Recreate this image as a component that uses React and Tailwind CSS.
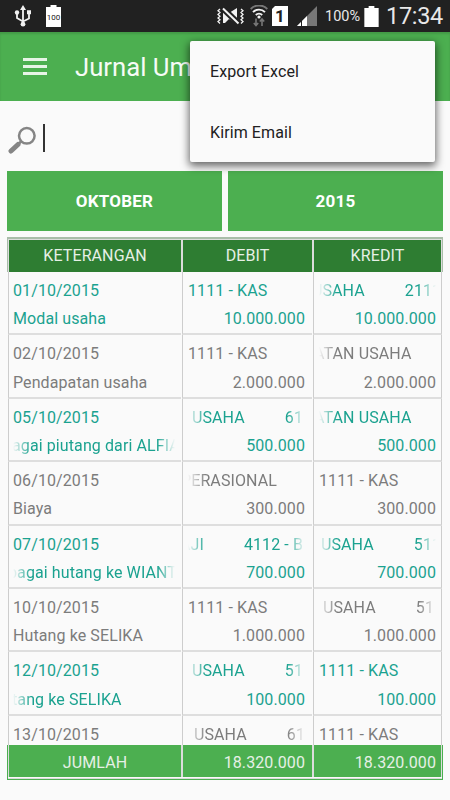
import React from 'react';

const entries = [
  {
    date: '01/10/2015',
    note: 'Modal usaha',
    debit: { parts: ['1111 - KAS'], shift: 0 },
    credit: { parts: ['USAHA', '2111'], shift: -7 },
    amount: '10.000.000',
  },
  {
    date: '02/10/2015',
    note: 'Pendapatan usaha',
    debit: { parts: ['1111 - KAS'], shift: 0 },
    credit: { parts: ['ATAN USAHA'], shift: -5 },
    amount: '2.000.000',
  },
  {
    date: '05/10/2015',
    note: 'agai piutang dari ALFIA',
    noteShift: -1,
    debit: { parts: ['USAHA', '61'], shift: 4 },
    credit: { parts: ['ATAN USAHA'], shift: -5 },
    amount: '500.000',
  },
  {
    date: '06/10/2015',
    note: 'Biaya',
    debit: { parts: ['PERASIONAL'], shift: -7 },
    credit: { parts: ['1111 - KAS'], shift: 0 },
    amount: '300.000',
  },
  {
    date: '07/10/2015',
    note: 'bagai hutang ke WIANT',
    noteShift: -5,
    debit: { parts: ['AJI', '4112 - B'], shift: -8 },
    credit: { parts: ['USAHA', '511'], shift: 2 },
    amount: '700.000',
  },
  {
    date: '10/10/2015',
    note: 'Hutang ke SELIKA',
    debit: { parts: ['1111 - KAS'], shift: 0 },
    credit: { parts: ['USAHA', '51'], shift: 4 },
    amount: '1.000.000',
  },
  {
    date: '12/10/2015',
    note: 'tang ke SELIKA',
    noteShift: -1,
    debit: { parts: ['USAHA', '51'], shift: 4 },
    credit: { parts: ['1111 - KAS'], shift: 0 },
    amount: '100.000',
  },
  {
    date: '13/10/2015',
    note: '',
    debit: { parts: ['USAHA', '61'], shift: 6 },
    credit: { parts: ['1111 - KAS'], shift: 0 },
    amount: '',
  },
];

const COLUMNS = 'grid grid-cols-[174px_131px_129px]';

const UsbIcon = () => (
  <svg className="h-[22px] w-[18px]" viewBox="0 0 18 22" fill="none" stroke="#f2f2f2" strokeWidth="1.8">
    <path d="M9 3v16M9 16.5 3 13V8.5M9 16.5l6-3V9" />
    <path d="M6 5 9 0l3 5zM13 5.2h4v4h-4z" fill="#f2f2f2" stroke="none" />
    <circle cx="3" cy="7.5" r="2.2" fill="#f2f2f2" stroke="none" />
    <circle cx="9" cy="19.2" r="2.4" fill="#f2f2f2" stroke="none" />
  </svg>
);

const MuteVibrateIcon = () => (
  <svg className="mr-[6px] h-[18px] w-[27px]" viewBox="0 0 27 18" fill="none" stroke="#f2f2f2" strokeWidth="1.3">
    <path d="M3 2 1 3.8l2 1.8-2 1.8 2 1.8-2 1.8 2 1.8-2 1.8 2 1.800M24 2l2 1.800-2 1.800 2 1.800-2 1.800 2 1.800-2 1.800 2 1.800-2 1.800" />
    <path d="M6 2v14h2l4-4 8 4.500V1L12 6z" fill="#f2f2f2" stroke="none" />
    <path d="M5.500 1 21.500 16.500" stroke="#212121" strokeWidth="6" />
    <path d="M6 1.500 21.500 16.500" strokeWidth="2" />
  </svg>
);

const WifiIcon = () => (
  <svg className="h-[22px] w-[18px]" viewBox="0 0 18 22" fill="none" strokeWidth="1.9">
    <path d="M.7 4a11.5 11.5 0 0 1 16.6 0" stroke="#777" />
    <path d="M3 7.2a8.2 8.2 0 0 1 12 0M5.8 10a4.6 4.6 0 0 1 6.4 0" stroke="#f2f2f2" />
    <circle cx="9" cy="12" r="1.6" fill="#f2f2f2" />
    <path d="M6 13.5v7M3.8 18 6 20.5 8.2 18M12 21v-7M9.8 16.5 12 14l2.2 2.5" stroke="#777" strokeWidth="1.6" />
  </svg>
);

const BatteryIcon = ({ className, label }) => (
  <svg className={className} viewBox="0 0 15 22">
    <path d="M4.5 0h6v2H15v20H0V2h4.5z" fill="#fff" />
    {label && (
      <text x="7.5" y="14.5" textAnchor="middle" fontSize="8" fontFamily="Roboto, sans-serif" fill="#212121">
        {label}
      </text>
    )}
  </svg>
);

const StatusBar = () => (
  <div className="flex h-8 items-center bg-[#212121] pl-[14px] text-[#e8e8e8]">
    <UsbIcon />
    <BatteryIcon className="ml-[14px] h-[22px] w-[15px]" label="100" />
    <div className="flex-1" />
    <MuteVibrateIcon />
    <WifiIcon />
    <div className="flex w-[182px] items-center pl-[4px]">
      <svg className="h-5 w-4 shrink-0" viewBox="0 0 16 20">
        <path d="M3 0h13v20H0V3z" fill="#fff" />
        <text x="8" y="16" textAnchor="middle" fontSize="17" fontWeight="700" fontFamily="Roboto, sans-serif" fill="#212121">1</text>
      </svg>
      <svg className="ml-[9px] h-5 w-5 shrink-0" viewBox="0 0 20 20">
        <path d="M0 20 20 0v20z" fill="#777" />
        <path d="M0 20 10 10v10z" fill="#fff" />
        <path d="M4.5 14v6" stroke="#212121" />
      </svg>
      <span className="ml-[8px] w-[36px] shrink-0 whitespace-nowrap pt-[2px] text-[14.5px] leading-[30px]">100%</span>
      <BatteryIcon className="ml-[3px] h-[21px] w-[15px] shrink-0" />
      <span className="ml-[7px] shrink-0 whitespace-nowrap text-[23.5px] leading-[30px] tracking-[-0.3px]">17:34</span>
    </div>
  </div>
);

const Menu = () => (
  <div className="absolute left-[190px] top-[41px] z-10 flex h-[121px] w-[245px] flex-col rounded-[2px] bg-[#fafafa] pl-5 text-[16px] tracking-[0.1px] text-[#212121] shadow-[0_3px_8px_1px_rgba(0,0,0,0.6)]">
    <div className="flex h-[62px] items-center">Export Excel</div>
    <div className="flex h-[59px] items-center">Kirim Email</div>
  </div>
);

const fade = (left, right) => {
  if (left && right) return '[mask-image:linear-gradient(to_right,transparent,#000_18px,#000_calc(100%-18px),transparent)]';
  if (left) return '[mask-image:linear-gradient(to_right,transparent,#000_18px)]';
  return '';
};

const Marquee = ({ parts, shift = 0 }) => (
  <div className={`flex w-full gap-[40px] overflow-hidden whitespace-nowrap ${fade(shift !== 0, parts.length > 1 || parts[0].length > 16)}`}>
    {parts.map((part, index) => (
      <span key={part} style={index === 0 ? { marginLeft: shift } : undefined}>{part}</span>
    ))}
  </div>
);

const CELL = 'overflow-hidden border-b-2 border-l border-b-[#dedede] border-l-[#cdcdcd] pt-[5px]';

const AccountCell = ({ account, amount, className }) => (
  <div className={`${CELL} pl-[5px] ${className}`}>
    <Marquee {...account} />
    <div className="text-right">{amount}</div>
  </div>
);

const EntryRow = ({ entry, odd }) => (
  <div className={`${COLUMNS} h-[63.4px] shrink-0 grid-rows-[63.4px] leading-[28.2px] ${odd ? 'text-[#1ba290]' : 'text-[#7c7c7c]'}`}>
    <div className={`${CELL} mr-px pl-[4px] pr-[6px]`}>
      <div>{entry.date}</div>
      <Marquee parts={[entry.note]} shift={entry.noteShift} />
    </div>
    <AccountCell account={entry.debit} amount={entry.amount} className="mr-px pr-[7px]" />
    <AccountCell account={entry.credit} amount={entry.amount} className="border-r border-r-[#cdcdcd] pr-[5px]" />
  </div>
);

export default function App() {
  return (
    <div className="relative flex h-[800px] w-[450px] flex-col overflow-hidden bg-[#fafafa] font-[Roboto,sans-serif]">
      <StatusBar />

      {/* Toolbar */}
      <div className="flex h-[69px] items-center bg-[#4caf50] pl-[23px] shadow-[inset_0_2px_2px_rgba(0,0,0,0.12)]">
        <div className="flex w-6 flex-col gap-[4px]">
          <div className="h-[3px] bg-[#e6f4e6]" />
          <div className="h-[3px] bg-[#e6f4e6]" />
          <div className="h-[3px] bg-[#e6f4e6]" />
        </div>
        <h1 className="ml-[28px] mt-[2px] whitespace-nowrap text-[25.7px] text-[#f6fbf6]">Jurnal Um</h1>
      </div>
      <Menu />

      {/* Search */}
      <div className="flex h-[70px] items-start pl-[8px] pt-[23px]">
        <svg className="mt-[2px] h-[29px] w-[29px]" viewBox="0 0 29 29" fill="none" stroke="#858585">
          <circle cx="18.8" cy="9.8" r="7.8" strokeWidth="2.5" />
          <path d="M13 15.500 10.500 18" strokeWidth="2.5" />
          <path d="M10 18.500 3 25" strokeWidth="5" strokeLinecap="round" />
        </svg>
        <div className="ml-[6px] h-[28px] w-[2px] bg-[#333]" />
      </div>

      {/* Period */}
      <div className="mx-[7px] flex h-[60px] gap-[6px] text-[17px] font-bold tracking-[0.2px] text-white">
        <button className="flex-1 bg-[#4caf50] pt-[2px]">OKTOBER</button>
        <button className="flex-1 bg-[#4caf50] pt-[2px]">2015</button>
      </div>

      {/* Journal table */}
      <div className="mx-[7px] mt-[6px] flex h-[543px] flex-col text-[16px] tracking-[0.1px]">
        <div className="h-[35px] shrink-0 border-x border-t-2 border-[#a9bda9]">
          <div className={`${COLUMNS} h-[33px] border-t border-[#dcdcdc] text-center leading-[32px] text-[#e6f0e6]`}>
            <div className="border-x border-[#dcdcdc] bg-[#2e7d32]">KETERANGAN</div>
            <div className="border-x border-[#dcdcdc] bg-[#2e7d32]">DEBIT</div>
            <div className="border-x border-[#dcdcdc] bg-[#2e7d32]">KREDIT</div>
          </div>
        </div>
        <div className="flex h-[473px] flex-col overflow-hidden pl-[1px]">
          {entries.map((entry, index) => (
            <EntryRow key={entry.date} entry={entry} odd={index % 2 === 0} />
          ))}
        </div>
        <div className="h-[35px] shrink-0 border-x border-b border-[#4caf50]">
          <div className={`${COLUMNS} h-[34px] grid-rows-[32px] border-b border-[#dcdcdc] leading-[36px] text-[#e6f0e6]`}>
            <div className="border-x border-[#dcdcdc] bg-[#4caf50] text-center">JUMLAH</div>
            <div className="border-x border-[#dcdcdc] bg-[#4caf50] pr-[7px] text-right">18.320.000</div>
            <div className="border-x border-[#dcdcdc] bg-[#4caf50] pr-[5px] text-right">18.320.000</div>
          </div>
        </div>
      </div>
    </div>
  );
}
